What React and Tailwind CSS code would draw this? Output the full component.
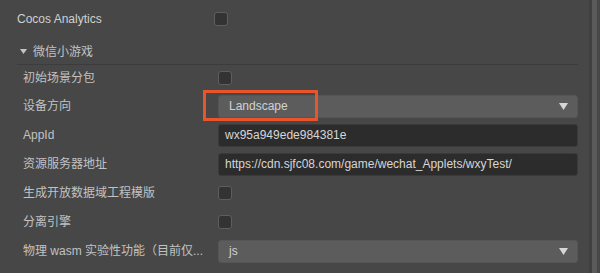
import React from "react";

const font = { fontFamily: '"Liberation Sans", Arial, "Noto Sans CJK SC", sans-serif' };

function Check() {
  return <div className="w-[14px] h-[14px] rounded-[3px] bg-[#333333] border border-[#5e5e5e]" />;
}

function Arrow() {
  return (
    <svg width="9" height="7" viewBox="0 0 9 7" className="block">
      <polygon points="0,0 9,0 4.5,7" fill="#d6d6d6" />
    </svg>
  );
}

function Select({ value }) {
  return (
    <div className="w-[360px] h-[23px] rounded-[3px] bg-[#5c5c5c] border border-[#555555] flex items-center justify-between pl-[10px] pr-[9px] text-[12px] text-[#d2d2d2]">
      <span>{value}</span>
      <Arrow />
    </div>
  );
}

function Input({ value }) {
  return (
    <div className="w-[360px] h-[23px] rounded-[3px] bg-[#2c2c2c] border border-[#3a3a3a] flex items-center pl-[6px] text-[12px] text-[#d6d6d6] whitespace-nowrap overflow-hidden">
      {value}
    </div>
  );
}

function Row({ label, children, h = "h-[28px]" }) {
  return (
    <div className={`flex items-center ${h}`}>
      <div className="w-[218px] shrink-0 pl-[23px] pr-[6px] text-[12px] text-[#c2c2c2] whitespace-nowrap">{label}</div>
      <div className="flex items-center">{children}</div>
    </div>
  );
}

export default function App() {
  return (
    <div className="w-[600px] h-[273px] bg-[#474747] flex overflow-hidden" style={font}>
      <div className="flex-1 flex flex-col pl-[17px] pr-[11px]">
        <div className="h-[36px] flex items-center pt-[1px]">
          <div className="w-[197px] text-[12px] text-[#d0d0d0]">Cocos Analytics</div>
          <Check />
        </div>
        <div className="h-[29px] flex items-center pt-[3px] border-b border-[#3c3c3c]">
          <svg width="7" height="5" viewBox="0 0 7 5" className="ml-[3px] mr-[6px] block">
            <polygon points="0,0 7,0 3.5,5" fill="#c4c4c4" />
          </svg>
          <span className="text-[12px] text-[#c2c2c2]">微信小游戏</span>
        </div>
        <div className="flex flex-col gap-[1px] -ml-[17px]">
          <Row label="初始场景分包" h="h-[26px]"><Check /></Row>
          <Row label="设备方向">
            <div className="relative">
              <Select value="Landscape" />
              <div className="absolute left-[-15px] top-[-5px] w-[115px] h-[31px] border-[3px] border-[#e8542b]" />
            </div>
          </Row>
          <Row label="AppId"><Input value="wx95a949ede984381e" /></Row>
          <Row label="资源服务器地址"><Input value="https://cdn.sjfc08.com/game/wechat_Applets/wxyTest/" /></Row>
          <Row label="生成开放数据域工程模版"><Check /></Row>
          <Row label="分离引擎"><Check /></Row>
          <Row label="物理 wasm 实验性功能（目前仅..."><Select value="js" /></Row>
        </div>
      </div>
      <div className="w-[3px] bg-[#404040]" />
      <div className="w-[5px] bg-[#5a5a5a]" />
      <div className="w-[3px] bg-[#474747]" />
    </div>
  );
}
